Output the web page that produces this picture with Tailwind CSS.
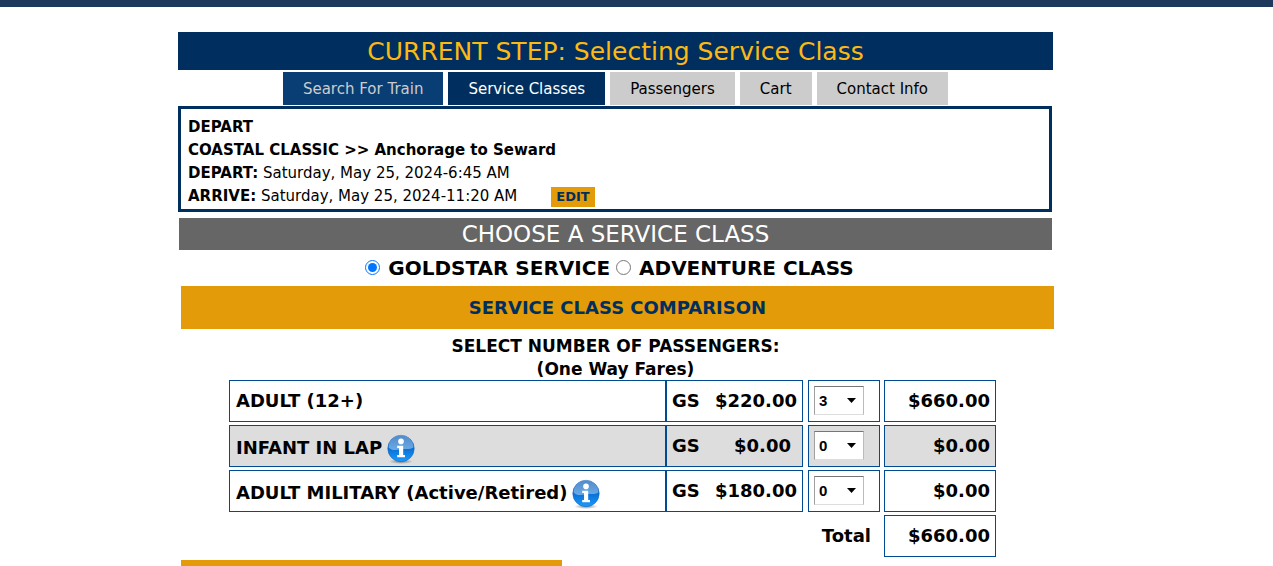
<!DOCTYPE html>
<html lang="en">
<head>
    <meta charset="UTF-8">
    <meta name="viewport" content="width=device-width, initial-scale=1.0">
    <title>Selecting Service Class</title>
    <!-- Tailwind CSS CDN -->
    <script src="https://cdn.jsdelivr.net/npm/@tailwindcss/browser@4"></script>
</head>
<body class="bg-white text-black font-[Verdana,'DejaVu_Sans',sans-serif] text-[15px] leading-[23px]">
    <!-- Info icon, shared by the fare rows -->
    <svg class="absolute size-0" aria-hidden="true">
        <defs>
            <linearGradient id="infoBlue" x1="0" y1="0" x2="0" y2="1">
                <stop offset="0" stop-color="#1c62b4"/>
                <stop offset="0.5" stop-color="#0a6fd4"/>
                <stop offset="1" stop-color="#1a9bff"/>
            </linearGradient>
            <linearGradient id="infoShine" x1="0" y1="0" x2="0" y2="1">
                <stop offset="0" stop-color="#fff" stop-opacity="0.25"/>
                <stop offset="1" stop-color="#fff" stop-opacity="0.4"/>
            </linearGradient>
            <radialGradient id="infoShadow">
                <stop offset="0" stop-color="#000" stop-opacity="0.45"/>
                <stop offset="1" stop-color="#000" stop-opacity="0"/>
            </radialGradient>
        </defs>
        <symbol id="info" viewBox="0 0 30 30">
            <ellipse cx="15" cy="27.5" rx="12" ry="2.5" fill="url(#infoShadow)"/>
            <circle cx="15" cy="14.5" r="13.2" fill="url(#infoBlue)" stroke="#1766bd" stroke-width="0.6"/>
            <path d="M2.6 13.5a12.4 12.4 0 0 1 24.8 0C24 16 19 14.6 15 15.2S6.5 17.5 2.6 13.5z" fill="url(#infoShine)"/>
            <circle cx="15" cy="7.4" r="2.8" fill="#fff"/>
            <path d="M11.2 11.8h6v9.2H19v2.2h-7.8V21H13v-7h-1.800z" fill="#fff"/>
        </symbol>
    </svg>

    <div class="h-[7px] bg-[#1f395d]"></div>

    <div class="pr-[42px] pt-[25px]">
        <main class="max-w-[875px] mx-auto">
            <h1 class="bg-[#002f5f] text-[#fdb913] text-[25px] leading-9 pt-[2px] text-center">CURRENT STEP: Selecting Service Class</h1>

            <!-- Steps -->
            <nav class="flex justify-center gap-[5px] mt-[2px] leading-[31px]">
                <a href="#" class="bg-[#093e74] text-[#ccc] px-5 pt-[2px]">Search For Train</a>
                <a href="#" class="bg-[#002f5f] text-white px-5 pt-[2px]">Service Classes</a>
                <a href="#" class="bg-[#ccc] px-5 pt-[2px]">Passengers</a>
                <a href="#" class="bg-[#ccc] px-5 pt-[2px]">Cart</a>
                <a href="#" class="bg-[#ccc] px-5 pt-[2px]">Contact Info</a>
            </nav>

            <!-- Trip -->
            <section class="mt-px mr-px border-[3px] border-[#002f5f] px-[7px] pt-[7px] pb-px">
                <p class="font-bold">DEPART</p>
                <p class="font-bold">COASTAL CLASSIC &gt;&gt; Anchorage to Seward</p>
                <p><b>DEPART:</b> Saturday, May 25, 2024-6:45 AM</p>
                <div class="flex items-center">
                    <p><b>ARRIVE:</b> Saturday, May 25, 2024-11:20 AM</p>
                    <button type="button" class="ml-[34px] bg-[#e39b0a] text-[#002f5f] font-bold text-[13px] leading-5 px-[5px]">EDIT</button>
                </div>
            </section>

            <h2 class="mt-[6px] mx-px bg-[#666] text-white text-[23px] leading-8 text-center">CHOOSE A SERVICE CLASS</h2>

            <form>
                <div class="flex justify-center h-9 items-center text-[20px] font-bold pr-[12px]">
                    <input type="radio" id="goldstar" name="serviceClass" checked class="size-[15px] mr-2 mb-[2px]">
                    <label for="goldstar">GOLDSTAR SERVICE</label>
                    <input type="radio" id="adventure" name="serviceClass" class="size-[15px] ml-[6px] mr-2 mb-[2px]">
                    <label for="adventure">ADVENTURE CLASS</label>
                </div>

                <button type="button" class="block w-full max-w-[873px] ml-[3px] bg-[#e39b0a] text-[#002f5f] font-bold text-[18px] leading-[43px]">SERVICE CLASS COMPARISON</button>

                <h3 class="pt-[6px] text-[17px] font-bold text-center">SELECT NUMBER OF PASSENGERS:<br>(One Way Fares)</h3>

                <!-- Fares -->
                <table class="w-full max-w-[767px] ml-[51px] -mt-px table-fixed border-collapse text-[18px] font-bold">
                    <colgroup>
                        <col>
                        <col class="w-[137px]">
                        <col class="w-[81px]">
                        <col class="w-[112px]">
                    </colgroup>
                    <tbody>
                        <tr>
                            <th scope="row" class="p-0 pb-[3px]">
                                <div class="flex items-center h-[42px] border border-[#004b91] pl-[6px] pb-[2px]">ADULT (12+)</div>
                            </th>
                            <td class="p-0 pb-[3px]">
                                <div class="flex items-center justify-between h-[42px] border border-[#004b91] px-[5px] pb-[2px]"><span>GS</span><span>$220.00</span></div>
                            </td>
                            <td class="p-0 pb-[3px] pl-[5px] pr-1">
                                <div class="h-[42px] border border-[#004b91] p-[5px]">
                                    <div class="relative w-[50px]">
                                        <select aria-label="Adult passengers" class="block appearance-none w-[50px] h-[29px] pl-1 bg-white border border-t-[#767676] border-l-[#a0a0a0] border-b-[#ddd] border-r-[#bbb] font-['Liberation_Sans',sans-serif] font-bold text-[15px] leading-[27px]">
                                            <option>0</option>
                                            <option>1</option>
                                            <option>2</option>
                                            <option selected>3</option>
                                        </select>
                                        <svg class="absolute right-2 top-3 w-[9px] h-[5px] pointer-events-none" viewBox="0 0 9 5"><path d="M0 0h9L4.5 5z"/></svg>
                                    </div>
                                </div>
                            </td>
                            <td class="p-0 pb-[3px]">
                                <div class="flex items-center justify-end h-[42px] border border-[#004b91] pr-[5px] pb-[2px]">$660.00</div>
                            </td>
                        </tr>
                        <tr>
                            <th scope="row" class="p-0 pb-[3px]">
                                <div class="flex items-center h-[42px] border border-[#004b91] bg-[#ddd] pl-[6px] pt-[3px]">INFANT IN LAP<svg class="size-[30px] ml-1 mt-[3px]" role="img" aria-label="Info"><use href="#info"/></svg></div>
                            </th>
                            <td class="p-0 pb-[3px]">
                                <div class="flex items-center justify-between h-[42px] border border-[#004b91] bg-[#ddd] pl-[5px] pr-[11px] pb-[2px]"><span>GS</span><span>$0.00</span></div>
                            </td>
                            <td class="p-0 pb-[3px] pl-[5px] pr-1">
                                <div class="h-[42px] border border-[#004b91] bg-[#ddd] p-[5px]">
                                    <div class="relative w-[50px]">
                                        <select aria-label="Infants in lap" class="block appearance-none w-[50px] h-[29px] pl-1 bg-white border border-t-[#767676] border-l-[#a0a0a0] border-b-[#ddd] border-r-[#bbb] font-['Liberation_Sans',sans-serif] font-bold text-[15px] leading-[27px]">
                                            <option selected>0</option>
                                            <option>1</option>
                                            <option>2</option>
                                            <option>3</option>
                                        </select>
                                        <svg class="absolute right-2 top-3 w-[9px] h-[5px] pointer-events-none" viewBox="0 0 9 5"><path d="M0 0h9L4.5 5z"/></svg>
                                    </div>
                                </div>
                            </td>
                            <td class="p-0 pb-[3px]">
                                <div class="flex items-center justify-end h-[42px] border border-[#004b91] bg-[#ddd] pr-[5px] pb-[2px]">$0.00</div>
                            </td>
                        </tr>
                        <tr>
                            <th scope="row" class="p-0 pb-[3px]">
                                <div class="flex items-center h-[42px] border border-[#004b91] pl-[6px] pt-[3px]">ADULT MILITARY (Active/Retired)<svg class="size-[30px] ml-1 mt-[3px]" role="img" aria-label="Info"><use href="#info"/></svg></div>
                            </th>
                            <td class="p-0 pb-[3px]">
                                <div class="flex items-center justify-between h-[42px] border border-[#004b91] px-[5px] pb-[2px]"><span>GS</span><span>$180.00</span></div>
                            </td>
                            <td class="p-0 pb-[3px] pl-[5px] pr-1">
                                <div class="h-[42px] border border-[#004b91] p-[5px]">
                                    <div class="relative w-[50px]">
                                        <select aria-label="Adult military passengers" class="block appearance-none w-[50px] h-[29px] pl-1 bg-white border border-t-[#767676] border-l-[#a0a0a0] border-b-[#ddd] border-r-[#bbb] font-['Liberation_Sans',sans-serif] font-bold text-[15px] leading-[27px]">
                                            <option selected>0</option>
                                            <option>1</option>
                                            <option>2</option>
                                            <option>3</option>
                                        </select>
                                        <svg class="absolute right-2 top-3 w-[9px] h-[5px] pointer-events-none" viewBox="0 0 9 5"><path d="M0 0h9L4.5 5z"/></svg>
                                    </div>
                                </div>
                            </td>
                            <td class="p-0 pb-[3px]">
                                <div class="flex items-center justify-end h-[42px] border border-[#004b91] pr-[5px] pb-[2px]">$0.00</div>
                            </td>
                        </tr>
                        <tr>
                            <th scope="row" colspan="3" class="p-0 pb-[5px] pr-[13px] text-right">Total</th>
                            <td class="p-0 pb-[3px]">
                                <div class="flex items-center justify-end h-[42px] border border-[#004b91] pr-[5px] pb-[2px]">$660.00</div>
                            </td>
                        </tr>
                    </tbody>
                </table>

                <div class="ml-[3px] max-w-[381px] h-[6px] bg-[#e39b0a]"></div>
            </form>
        </main>
    </div>
</body>
</html>
